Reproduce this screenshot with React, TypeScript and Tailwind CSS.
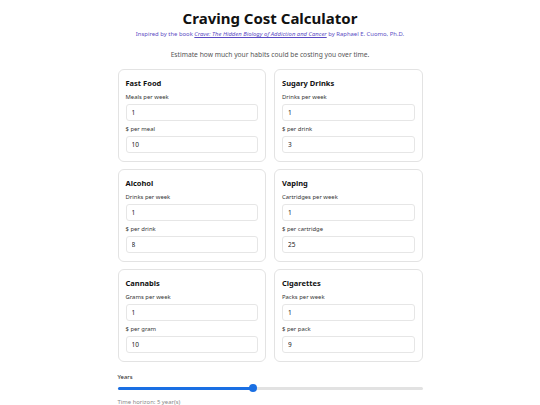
import { useState } from "react";

type Habit = {
  name: string;
  qtyLabel: string;
  priceLabel: string;
  qty: number;
  price: number;
};

const initialHabits: Habit[] = [
  { name: "Fast Food", qtyLabel: "Meals per week", priceLabel: "$ per meal", qty: 1, price: 10 },
  { name: "Sugary Drinks", qtyLabel: "Drinks per week", priceLabel: "$ per drink", qty: 1, price: 3 },
  { name: "Alcohol", qtyLabel: "Drinks per week", priceLabel: "$ per drink", qty: 1, price: 8 },
  { name: "Vaping", qtyLabel: "Cartridges per week", priceLabel: "$ per cartridge", qty: 1, price: 25 },
  { name: "Cannabis", qtyLabel: "Grams per week", priceLabel: "$ per gram", qty: 1, price: 10 },
  { name: "Cigarettes", qtyLabel: "Packs per week", priceLabel: "$ per pack", qty: 1, price: 9 },
];

const MIN_YEARS = 1;
const MAX_YEARS = 10;

function Field({
  label,
  value,
  onChange,
}: {
  label: string;
  value: number;
  onChange: (v: number) => void;
}) {
  return (
    <label className="flex flex-col">
      <span className="h-[8px] text-[5.9px] leading-[8px] text-[#333]">{label}</span>
      <input
        type="number"
        value={value}
        onChange={(e) => onChange(Number(e.target.value))}
        className="mt-[3px] box-border block h-[17px] w-full rounded-[3px] border border-[#e6e6e6] bg-white px-[5px] text-[6.5px] leading-[15px] text-[#222] outline-none"
      />
    </label>
  );
}

export default function App() {
  const [habits, setHabits] = useState(initialHabits);
  const [years, setYears] = useState(5);

  const update = (i: number, key: "qty" | "price", v: number) =>
    setHabits((hs) => hs.map((h, j) => (j === i ? { ...h, [key]: v } : h)));

  const pct = ((years - MIN_YEARS) / (MAX_YEARS - MIN_YEARS)) * 100;

  return (
    <div className="min-h-screen bg-white font-['Noto_Sans',sans-serif] text-[#111]">
      <div className="mx-auto flex w-[305px] flex-col pt-[9px]">
        {/* ── Header ── */}
        <h1 className="h-[18px] text-center text-[15px] font-bold leading-[18px] text-[#111]">
          Craving Cost Calculator
        </h1>
        <p className="mt-[3px] h-[8px] text-center text-[5.9px] leading-[8px] text-[#5b4bc4]">
          Inspired by the book{" "}
          <a href="#" className="italic underline">
            Crave: The Hidden Biology of Addiction and Cancer
          </a>{" "}
          by Raphael E. Cuomo, Ph.D.
        </p>
        <p className="mt-[11.5px] h-[9px] text-center text-[6.7px] leading-[9px] text-[#555]">
          Estimate how much your habits could be costing you over time.
        </p>

        {/* ── Habit cards ── */}
        <div className="mt-[10.5px] grid grid-cols-2 gap-x-[8px] gap-y-[7px]">
          {habits.map((h, i) => (
            <div
              key={h.name}
              className="box-border flex h-[93px] flex-col rounded-[6px] border border-[#e3e3e3] bg-white px-[7px] pt-[8px]"
            >
              <div className="h-[10px] text-[7.5px] font-bold leading-[10px] text-[#111]">{h.name}</div>
              <div className="mt-[5px]">
                <Field label={h.qtyLabel} value={h.qty} onChange={(v) => update(i, "qty", v)} />
              </div>
              <div className="mt-[4px]">
                <Field label={h.priceLabel} value={h.price} onChange={(v) => update(i, "price", v)} />
              </div>
            </div>
          ))}
        </div>

        {/* ── Years slider ── */}
        <div className="mt-[11px] flex flex-col">
          <div className="h-[8px] text-[6px] leading-[8px] text-[#222]">Years</div>
          <div className="relative mt-[2.5px] h-[9px]">
            <div className="absolute inset-x-0 top-[3px] h-[3px] rounded-full bg-[#e2e2e2]" />
            <div
              className="absolute left-0 top-[3px] h-[3px] rounded-full bg-[#1a6fe3]"
              style={{ width: `${pct}%` }}
            />
            <div
              className="absolute top-[0.5px] h-[8px] w-[8px] -translate-x-1/2 rounded-full bg-[#1a6fe3]"
              style={{ left: `${pct}%` }}
            />
            <input
              type="range"
              min={MIN_YEARS}
              max={MAX_YEARS}
              value={years}
              onChange={(e) => setYears(Number(e.target.value))}
              className="absolute inset-0 h-full w-full cursor-pointer opacity-0"
            />
          </div>
          <div className="mt-[5.5px] h-[8px] text-[5.9px] leading-[8px] text-[#888]">
            Time horizon: {years} year(s)
          </div>
        </div>
      </div>
    </div>
  );
}
